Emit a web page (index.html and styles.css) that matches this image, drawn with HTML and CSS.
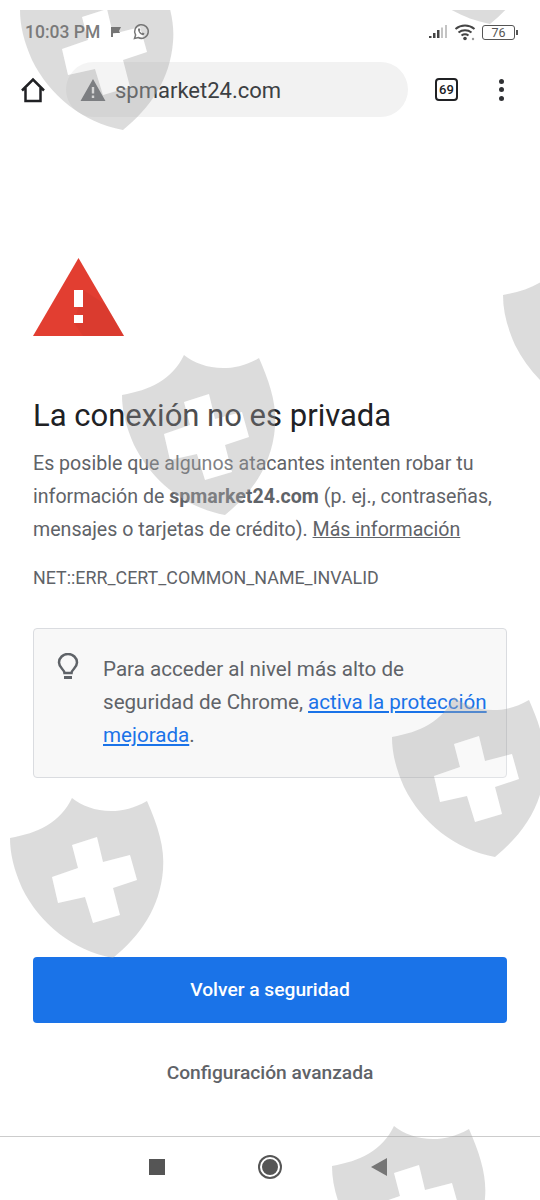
FILE: index.html
```html
<!DOCTYPE html>
<html lang="es">
<head>
  <meta charset="UTF-8">
  <title>Error de privacidad</title>
  <link rel="stylesheet" href="styles.css">
</head>
<body>
  <svg class="defs" width="0" height="0">
    <symbol id="shield" viewBox="0 0 155 162">
      <path class="shield-body" fill-rule="evenodd" d="M0 40C28 35 50 25 62 0C78 13 108 20 137 3C148 28 155 50 153 72C150 110 130 138 103 160C62 152 30 126 12 90C4 72 0 56 0 40ZM62 47L68 70L42 79L48 105L75 99L83 125L110 117L103 90L127 82L120 57L93 64L87 39Z"/>
      <path class="shield-cross" d="M62 47L68 70L42 79L48 105L75 99L83 125L110 117L103 90L127 82L120 57L93 64L87 39Z"/>
    </symbol>
  </svg>

  <div class="phone">
    <!-- barra de estado -->
    <div class="status-bar">
      <div class="status-left">
        <span class="clock">10:03 PM</span>
        <svg class="flag" width="12" height="12" viewBox="0 0 12 12"><path d="M1 1H11L9 5L10 7H3V11H1Z"/></svg>
        <svg class="whatsapp" width="18" height="18" viewBox="0 0 18 18"><path class="wa-ring" d="M2.5 15.5L3.6 12A6.8 6.8 0 1 1 6.2 14.5Z"/><path class="wa-phone" d="M6.3 5.6C5.6 6.5 6 8.2 7.400 9.900C9 11.700 10.800 12.300 11.900 11.700L12.500 10.500L10.800 9.500L10 10.200C9 9.800 8.200 8.900 7.700 7.900L8.400 7.100L7.500 5.300Z"/></svg>
      </div>
      <div class="status-right">
        <svg class="signal" width="22" height="14" viewBox="0 0 22 14">
          <rect x="0" y="11" width="2.500" height="2"/><rect x="4" y="8" width="2.500" height="5"/><rect x="8" y="5" width="2.500" height="8"/>
          <rect class="off" x="12" y="2.500" width="2" height="10.500"/><rect class="off" x="16" y="0" width="2" height="13"/>
        </svg>
        <svg class="wifi" width="24" height="18" viewBox="0 0 24 18">
          <path d="M1.500 6A15 15 0 0 1 20.500 6M4.500 9.500A10.500 10.500 0 0 1 17.500 9.500M7.500 12.500A6 6 0 0 1 14.500 12.500"/>
          <circle cx="11" cy="15.500" r="1.800"/><circle class="wifi-dot" cx="19" cy="16" r="1.200"/>
        </svg>
        <div class="battery"><span class="battery-level">76</span></div>
        <span class="battery-tip"></span>
      </div>
    </div>

    <!-- barra del navegador -->
    <div class="toolbar">
      <svg class="home-icon" width="28" height="28" viewBox="0 0 28 28"><path d="M3 14.500L14 3.500L25 14.500M6.500 12V25H21.500V12"/></svg>
      <div class="omnibox">
        <svg class="warn-icon" width="26" height="24" viewBox="0 0 26 24"><path fill-rule="evenodd" d="M13 1L25.500 23H0.500ZM11.800 9V15.500H14.200V9ZM11.800 17.500V20H14.200V17.500Z"/></svg>
        <span class="url">spmarket24.com</span>
      </div>
      <div class="tab-count">69</div>
      <div class="menu-dots"><span></span><span></span><span></span></div>
    </div>

    <!-- contenido -->
    <main class="content">
      <svg class="alert-icon" width="91" height="78" viewBox="0 0 91 78">
        <path class="alert-tri" d="M45.500 0L91 78H0Z"/>
        <path class="alert-shade" d="M50 32L72 46L91 78H50L41 65Z"/>
        <path class="alert-mark" d="M41 32H50V49H41ZM41 57H50V65H41Z"/>
      </svg>

      <h1 class="title">La conexión no es privada</h1>
      <p class="message">Es posible que algunos atacantes intenten robar tu información de <strong>spmarket24.com</strong> (p. ej., contraseñas, mensajes o tarjetas de crédito). <a class="more-link" href="#">Más información</a></p>
      <p class="error-code">NET::ERR_CERT_COMMON_NAME_INVALID</p>

      <div class="tip-card">
        <svg class="bulb-icon" width="22" height="28" viewBox="0 0 22 28"><path class="bulb-line" d="M7.500 20C7.500 16.500 2 15 2 9.500A9 8.500 0 0 1 20 9.500C20 15 14.500 16.500 14.500 20Z"/><path class="bulb-base" d="M7 24.500H15"/></svg>
        <p class="tip-text">Para acceder al nivel más alto de seguridad de Chrome, <a class="tip-link" href="#">activa la protección mejorada</a>.</p>
      </div>

      <div class="actions">
        <button class="primary-btn">Volver a seguridad</button>
        <button class="secondary-btn">Configuración avanzada</button>
      </div>
    </main>

    <!-- navegación del sistema -->
    <nav class="nav-bar">
      <span class="nav-square"></span>
      <span class="nav-circle"></span>
      <span class="nav-back"></span>
    </nav>

    <!-- marca de agua encima de la captura -->
    <div class="watermarks">
      <svg class="mark mark-a"><use href="#shield"/></svg>
      <svg class="mark mark-b"><use href="#shield"/></svg>
      <svg class="mark mark-c"><use href="#shield"/></svg>
      <svg class="mark mark-d"><use href="#shield"/></svg>
      <svg class="mark mark-e"><use href="#shield"/></svg>
      <svg class="mark mark-f"><use href="#shield"/></svg>
      <svg class="mark mark-g"><use href="#shield"/></svg>
    </div>
  </div>
</body>
</html>
```

FILE: styles.css
```css
body {
  margin: 0;
  background: #fff;
  font-family: Roboto, "Liberation Sans", sans-serif;
  color: #5f6368;
}

.defs {
  position: absolute;
}

.phone {
  position: relative;
  width: 540px;
  height: 1200px;
  overflow: hidden;
  display: flex;
  flex-direction: column;
}

.status-bar {
  height: 62px;
  box-sizing: border-box;
  padding: 22px 22px 0 25px;
  display: flex;
  justify-content: space-between;
  align-items: flex-start;
}

.status-left,
.status-right {
  display: flex;
  align-items: center;
  height: 20px;
}

.clock {
  font-size: 17.500px;
  font-weight: 500;
  color: #5c5c5c;
}

.flag {
  margin-left: 10px;
  fill: #555;
}

.whatsapp {
  margin-left: 10px;
}

.wa-ring {
  fill: none;
  stroke: #555;
  stroke-width: 1.500;
}

.wa-phone {
  fill: #555;
}

.signal {
  fill: #444;
  margin-right: 3px;
}

.signal .off {
  fill: #c4c4c4;
}

.wifi {
  margin-right: 4px;
}

.wifi path {
  fill: none;
  stroke: #444;
  stroke-width: 2;
}

.wifi circle {
  fill: #444;
}

.wifi .wifi-dot {
  fill: #999;
}

.battery {
  width: 31px;
  height: 13px;
  border: 1.500px solid #555;
  border-radius: 3px;
  display: flex;
  align-items: center;
  justify-content: center;
}

.battery-level {
  font-size: 12.500px;
  color: #555;
}

.battery-tip {
  width: 2px;
  height: 5px;
  margin-left: 1px;
  background: #555;
}

.toolbar {
  height: 55px;
  display: flex;
  align-items: center;
}

.home-icon {
  margin-left: 19px;
  fill: none;
  stroke: #202124;
  stroke-width: 2.500;
}

.omnibox {
  width: 342px;
  height: 55px;
  margin-left: 19px;
  border-radius: 28px;
  background: #f2f2f2;
  display: flex;
  align-items: center;
}

.warn-icon {
  margin-left: 14px;
  fill: #5f6368;
}

.url {
  margin-left: 9px;
  padding-top: 2px;
  font-size: 22px;
  color: #3c4043;
}

.tab-count {
  width: 19px;
  height: 19px;
  margin-left: 27px;
  border: 2.500px solid #202124;
  border-radius: 4px;
  display: flex;
  align-items: center;
  justify-content: center;
  font-size: 13px;
  font-weight: 500;
  color: #202124;
}

.menu-dots {
  margin-left: 41px;
  display: flex;
  flex-direction: column;
  gap: 3.500px;
}

.menu-dots span {
  width: 5px;
  height: 5px;
  border-radius: 50%;
  background: #303134;
}

.content {
  flex: 1;
  padding: 141px 33px 0;
  display: flex;
  flex-direction: column;
}

.alert-icon {
  display: block;
}

.alert-tri {
  fill: #e23e31;
}

.alert-shade {
  fill: #b93226;
  opacity: 0.18;
}

.alert-mark {
  fill: #fff;
}

.title {
  margin: 60px 0 0;
  font-size: 31px;
  line-height: 40px;
  font-weight: 400;
  color: #202124;
}

.message {
  margin: 11px 0 0;
  font-size: 19.600px;
  line-height: 33px;
}

.message strong {
  font-weight: 700;
}

.more-link {
  color: #5f6368;
}

.error-code {
  margin: 20px 0 0;
  font-size: 17.850px;
  line-height: 24px;
}

.tip-card {
  margin-top: 38px;
  height: 150px;
  box-sizing: border-box;
  padding: 24px 15px 0 23px;
  background: #f8f8f8;
  border: 1px solid #dadce0;
  border-radius: 4px;
  display: flex;
  align-items: flex-start;
  gap: 24px;
}

.bulb-icon {
  flex: none;
  fill: none;
  stroke: #5f6368;
}

.bulb-line {
  stroke-width: 2.500;
}

.bulb-base {
  stroke-width: 3;
}

.tip-text {
  margin: 0;
  font-size: 20.600px;
  line-height: 33px;
}

.tip-link {
  color: #1a73e8;
}

.actions {
  margin-top: 179px;
  display: flex;
  flex-direction: column;
}

.primary-btn {
  height: 66px;
  padding-bottom: 3px;
  border: none;
  border-radius: 4px;
  background: #1a73e8;
  color: #fff;
  font: 500 19.200px Roboto, "Liberation Sans", sans-serif;
}

.secondary-btn {
  height: 66px;
  margin-top: 16px;
  border: none;
  background: none;
  color: #5f6368;
  font: 500 19.200px Roboto, "Liberation Sans", sans-serif;
}

.nav-bar {
  height: 64px;
  border-top: 1px solid #ccc;
  padding: 0 0 4px 149px;
  display: flex;
  align-items: center;
  box-sizing: border-box;
}

.nav-square {
  width: 16px;
  height: 16px;
  background: #555;
}

.nav-circle {
  width: 16px;
  height: 16px;
  margin-left: 95px;
  border-radius: 50%;
  background: #555;
  border: 2px solid #fff;
  box-shadow: 0 0 0 2px #555;
}

.nav-back {
  width: 0;
  height: 0;
  margin-left: 91px;
  border-top: 9px solid transparent;
  border-bottom: 9px solid transparent;
  border-right: 16px solid #555;
}

.watermarks {
  position: absolute;
  left: 0;
  right: 0;
  top: 10px;
  bottom: 0;
  overflow: hidden;
  pointer-events: none;
}

.mark {
  position: absolute;
  width: 155px;
  height: 162px;
}

.shield-body {
  fill: rgba(167, 167, 167, 0.4);
}

.shield-cross {
  fill: rgba(255, 255, 255, 0.2);
}

.mark-a { left: 10px; top: 788px; }
.mark-b { left: 122px; top: 345px; }
.mark-c { left: 392px; top: 687px; }
.mark-d { left: 332px; top: 1116px; }
.mark-e { left: 20px; top: -40px; }
.mark-f { left: 387px; top: -146px; }
.mark-g { left: 503px; top: 245px; }
```
